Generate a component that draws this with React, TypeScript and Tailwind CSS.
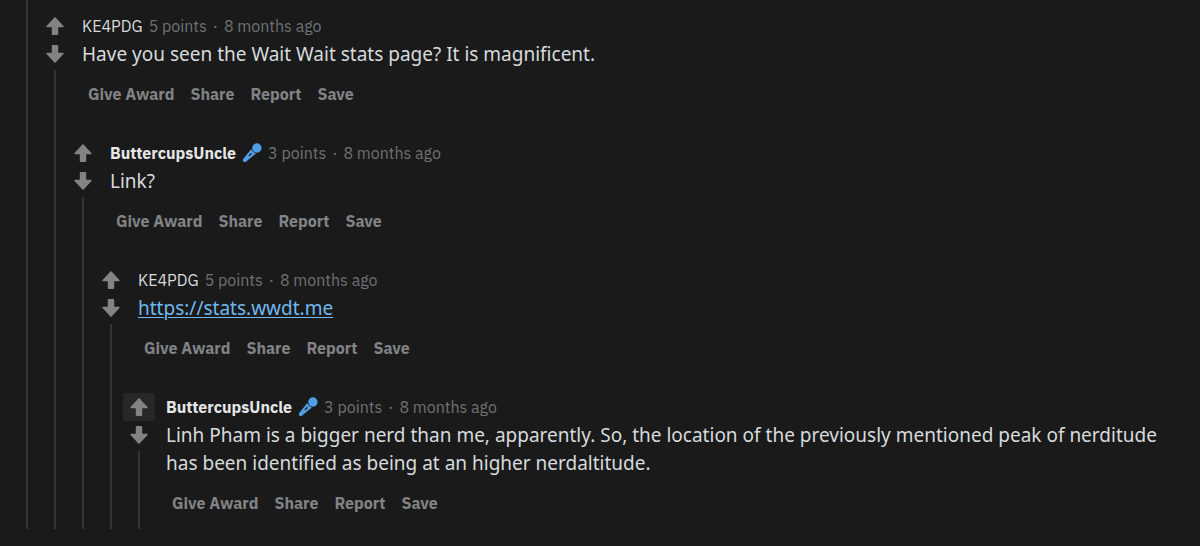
import type { ReactNode } from "react";

type CommentData = {
  author: string;
  original?: boolean;
  points: number;
  age: string;
  body: ReactNode;
  highlighted?: boolean;
  reply?: CommentData;
};

const thread: CommentData = {
  author: "KE4PDG",
  points: 5,
  age: "8 months ago",
  body: "Have you seen the Wait Wait stats page? It is magnificent.",
  reply: {
    author: "ButtercupsUncle",
    original: true,
    points: 3,
    age: "8 months ago",
    body: "Link?",
    reply: {
      author: "KE4PDG",
      points: 5,
      age: "8 months ago",
      body: (
        <a href="https://stats.wwdt.me" className="text-[#70b8f0] underline decoration-1 underline-offset-2">
          https://stats.wwdt.me
        </a>
      ),
      reply: {
        author: "ButtercupsUncle",
        original: true,
        points: 3,
        age: "8 months ago",
        highlighted: true,
        body: "Linh Pham is a bigger nerd than me, apparently. So, the location of the previously mentioned peak of nerditude has been identified as being at an higher nerdaltitude.",
      },
    },
  },
};

const actions = ["Give Award", "Share", "Report", "Save"];

function Arrow({ down = false }: { down?: boolean }) {
  return (
    <svg viewBox="0 0 18 18" className={down ? "size-[18px] rotate-180" : "size-[18px]"} fill="currentColor" aria-hidden="true">
      <path d="M8.4.5Q9 0 9.6.5L17.5 9Q18 10.2 17 10.2H12.2V17.3Q12.2 18 11.5 18H6.5Q5.8 18 5.8 17.3V10.2H1Q0 10.2 .5 9Z" />
    </svg>
  );
}

function Microphone() {
  return (
    <svg viewBox="0 0 20 20" className="size-5 shrink-0 text-[#4f9fe6]" role="img" aria-label="Original poster">
      <circle cx="14.9" cy="5" r="4.7" fill="currentColor" />
      <path d="M9.3 6 14 10.6 4.2 18.4Q2.6 19.6 1.3 18.5.2 17.3 1.4 15.7Z" fill="currentColor" />
      <path d="M9.7 6Q10.6 9.2 13.8 10.2" fill="none" stroke="#1a1a1b" strokeWidth="0.6" />
      <path d="M7.2 12.6 9 10.8" stroke="#1a1a1b" strokeWidth="1.3" strokeLinecap="round" />
    </svg>
  );
}

function ThreadLine() {
  return <div className="w-0.5 grow bg-[#343536]" />;
}

function Comment({ comment }: { comment: CommentData }) {
  return (
    <article className="flex">
      <div className="flex w-7 shrink-0 flex-col items-center text-[#818384]">
        <button
          type="button"
          aria-label="Upvote"
          className={
            comment.highlighted
              ? "flex h-7 w-8 items-center justify-center rounded-xs bg-[#272729]"
              : "flex h-7 w-8 items-center justify-center"
          }
        >
          <Arrow />
        </button>
        <button type="button" aria-label="Downvote" className="mb-0.5 flex h-7 w-8 items-center justify-center">
          <Arrow down />
        </button>
        <ThreadLine />
      </div>
      <div className="min-w-0 grow">
        <div className="pl-[13px]">
          <header className="flex h-7 items-center gap-1.5 font-['IBM_Plex_Sans',Roboto,sans-serif] text-base text-[#6f7173]">
            <span className={comment.original ? "font-bold text-[#e4e6e7]" : "text-[#d7dadc]"}>{comment.author}</span>
            {comment.original && <Microphone />}
            <span>{comment.points} points</span>
            <span>·</span>
            <span>{comment.age}</span>
          </header>
          <p className="pr-8 text-[19px] leading-7 text-[#d7dadc]">{comment.body}</p>
          <div className="mt-3 flex h-7 items-center gap-4 pl-1.5 font-['IBM_Plex_Sans',Roboto,sans-serif] text-base font-bold text-[#818384]">
            {actions.map((action) => (
              <button key={action} type="button">
                {action}
              </button>
            ))}
          </div>
        </div>
        {comment.reply ? (
          <div className="pt-[31px]">
            <Comment comment={comment.reply} />
          </div>
        ) : (
          <div className="h-3" />
        )}
      </div>
    </article>
  );
}

export default function App() {
  return (
    <main className="min-h-screen bg-[#1a1a1b] pb-4 pl-[13px] font-['Noto_Sans',sans-serif]">
      <div className="flex">
        <div className="flex w-7 shrink-0 flex-col items-center">
          <ThreadLine />
        </div>
        <div className="min-w-0 grow pt-3">
          <Comment comment={thread} />
        </div>
      </div>
    </main>
  );
}
